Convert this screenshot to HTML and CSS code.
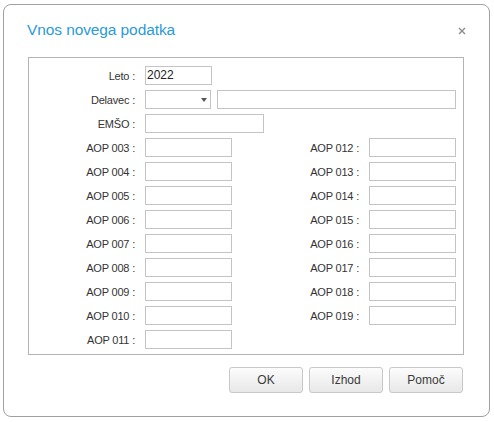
FILE: index.html
```html
<!DOCTYPE html>
<html lang="sl">
<head>
    <meta charset="UTF-8">
    <title>Vnos novega podatka</title>
    <link rel="stylesheet" href="styles.css">
</head>
<body>
    <div class="dialog">
        <div class="dialog-header">
            <span class="dialog-title">Vnos novega podatka</span>
            <svg class="close" width="8" height="8" viewBox="0 0 8 8">
                <path d="M1 1 L7 7 M7 1 L1 7" stroke="#8c8c8c" stroke-width="1.4" fill="none"/>
            </svg>
        </div>
        <div class="box">
            <label>Leto :</label>
            <div class="field span-rest"><span class="input w-leto">2022</span></div>

            <label>Delavec :</label>
            <div class="field span-rest">
                <span class="input select"><span class="arrow"></span></span>
                <span class="input grow"></span>
            </div>

            <label>EMŠO :</label>
            <div class="field span-rest"><span class="input w-emso"></span></div>

            <label>AOP 003 :</label><span class="input"></span>
            <label>AOP 012 :</label><span class="input"></span>
            <label>AOP 004 :</label><span class="input"></span>
            <label>AOP 013 :</label><span class="input"></span>
            <label>AOP 005 :</label><span class="input"></span>
            <label>AOP 014 :</label><span class="input"></span>
            <label>AOP 006 :</label><span class="input"></span>
            <label>AOP 015 :</label><span class="input"></span>
            <label>AOP 007 :</label><span class="input"></span>
            <label>AOP 016 :</label><span class="input"></span>
            <label>AOP 008 :</label><span class="input"></span>
            <label>AOP 017 :</label><span class="input"></span>
            <label>AOP 009 :</label><span class="input"></span>
            <label>AOP 018 :</label><span class="input"></span>
            <label>AOP 010 :</label><span class="input"></span>
            <label>AOP 019 :</label><span class="input"></span>
            <label>AOP 011 :</label><span class="input"></span>
        </div>
        <div class="buttons">
            <button>OK</button>
            <button>Izhod</button>
            <button>Pomoč</button>
        </div>
    </div>
</body>
</html>
```

FILE: styles.css
```css
body {
    margin: 0;
    background-color: #ffffff;
    font-family: "Liberation Sans", Arial, sans-serif;
    color: #333333;
}
.dialog {
    margin: 4px 0 0 3px;
    width: 436px;
    height: 411px;
    border: 1px solid #a0a0a0;
    border-radius: 8px;
    padding: 0 25px 0 24px;
}
.dialog-header {
    display: flex;
    justify-content: space-between;
    align-items: center;
    height: 20px;
    padding: 15px 0 17px 0;
}
.dialog-title {
    font-size: 15.5px;
    color: #2a9ad9;
    margin-left: -1px;
    letter-spacing: -0.1px;
}
.close {
    margin-right: -2px;
    margin-top: 1px;
}
.box {
    border: 1px solid #b4b4b4;
    padding: 8px 6px 5px 0;
    display: grid;
    grid-template-columns: 106px 87px 117px 87px;
    grid-auto-rows: 19px;
    column-gap: 10px;
    row-gap: 5px;
}
label {
    font-size: 11px;
    letter-spacing: -0.2px;
    text-align: right;
    align-self: center;
    color: #333333;
}
.field {
    display: flex;
    gap: 6px;
}
.span-rest {
    grid-column: 2 / -1;
}
.input {
    display: block;
    height: 19px;
    border: 1px solid #c4c4c4;
    box-sizing: border-box;
    background-color: #ffffff;
    font-size: 12px;
    line-height: 17px;
    padding-left: 1px;
    color: #222222;
}
.w-leto {
    width: 67px;
}
.w-emso {
    width: 119px;
}
.select {
    width: 66px;
    position: relative;
}
.arrow {
    position: absolute;
    right: 3px;
    top: 7px;
    border-left: 3.5px solid transparent;
    border-right: 3.5px solid transparent;
    border-top: 4px solid #555555;
}
.grow {
    flex: 1;
}
.buttons {
    display: flex;
    justify-content: flex-end;
    gap: 6px;
    margin-top: 12px;
    margin-right: 1px;
}
button {
    width: 74px;
    height: 26px;
    border: 1px solid #c8c8c8;
    border-radius: 3px;
    background: linear-gradient(#fcfcfc, #e8e8e8);
    font-family: "Liberation Sans", Arial, sans-serif;
    font-size: 12px;
    color: #3a3a3a;
    padding: 0;
}
```
